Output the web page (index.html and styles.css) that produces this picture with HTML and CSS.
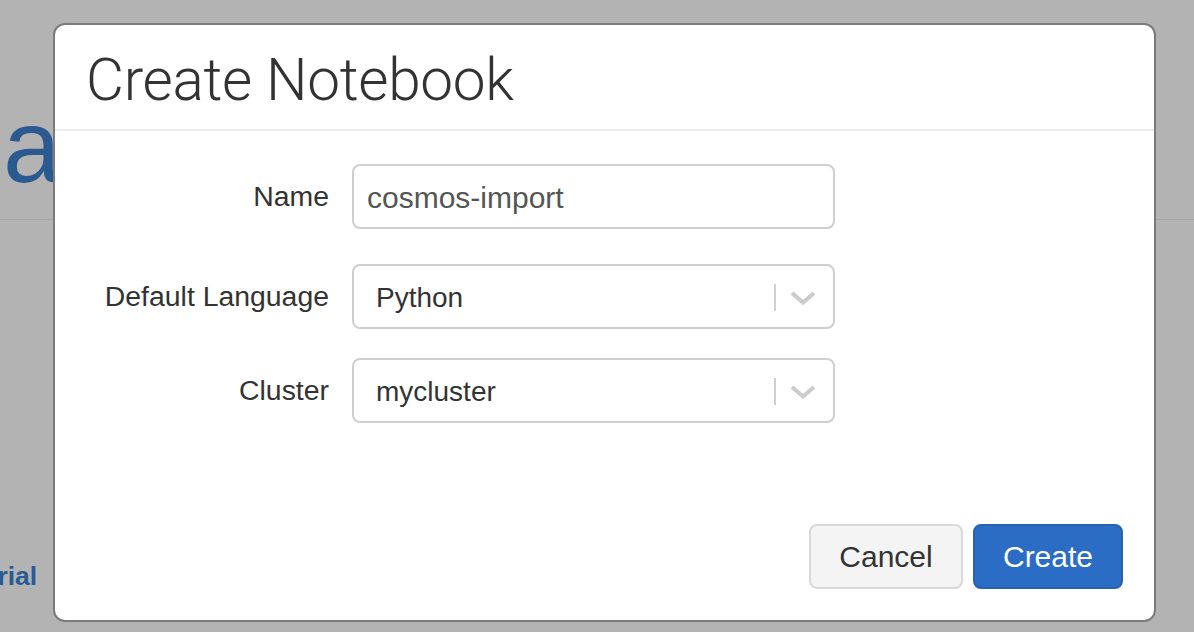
FILE: index.html
```html
<!DOCTYPE html>
<html>
<head>
<meta charset="utf-8">
<link rel="stylesheet" href="styles.css">
</head>
<body>
<div class="page">
  <div class="topbar"><span class="brand">a</span></div>
  <div class="content"><a class="tut">Tutorial</a></div>
</div>
<div class="overlay">
  <div class="modal">
    <div class="modal-header"><h4 class="modal-title">Create Notebook</h4></div>
    <div class="modal-body">
      <div class="row row-name">
        <label class="lbl">Name</label>
        <div class="input">cosmos-import</div>
      </div>
      <div class="row row-lang">
        <label class="lbl">Default Language</label>
        <div class="select"><span class="val">Python</span><span class="sep"></span>
          <svg class="chev" width="26" height="14" viewBox="0 0 26 14"><polyline points="2,2 13,11.5 24,2" fill="none" stroke="#cccccc" stroke-width="4.2" stroke-linecap="butt"/></svg>
        </div>
      </div>
      <div class="row row-cluster">
        <label class="lbl">Cluster</label>
        <div class="select"><span class="val">mycluster</span><span class="sep"></span>
          <svg class="chev" width="26" height="14" viewBox="0 0 26 14"><polyline points="2,2 13,11.5 24,2" fill="none" stroke="#cccccc" stroke-width="4.2" stroke-linecap="butt"/></svg>
        </div>
      </div>
    </div>
    <div class="modal-footer">
      <button class="btn btn-default">Cancel</button>
      <button class="btn btn-primary">Create</button>
    </div>
  </div>
</div>
</body>
</html>
```
FILE: styles.css
```css
html, body {
  margin: 0;
  padding: 0;
  height: 100%;
  overflow: hidden;
}
body {
  background: #b3b3b3;
  font-family: "Liberation Sans", Arial, sans-serif;
  color: #333;
}
.page {
  height: 632px;
}
.topbar {
  height: 220px;
  border-bottom: 1px solid #a7a7a7;
  box-sizing: border-box;
  padding-top: 94px;
}
.brand {
  display: block;
  font-size: 104px;
  line-height: 1;
  color: #2b5a91;
  margin-left: 3px;
}
.content {
  padding-top: 343px;
}
.tut {
  display: block;
  font-size: 26.5px;
  line-height: 1;
  font-weight: bold;
  color: #2b5a91;
  margin-left: -58px;
}
.overlay {
  position: fixed;
  inset: 0;
  padding: 23px 0 0 53px;
}
.modal {
  width: 1103px;
  box-sizing: border-box;
  background: #fff;
  border: 2px solid #7b7b7b;
  border-radius: 12px;
}
.modal-header {
  height: 106px;
  box-sizing: border-box;
  border-bottom: 2px solid #ececec;
  padding: 23px 31px 0;
}
.modal-title {
  margin: 0;
  font-family: "Roboto", "Liberation Sans", sans-serif;
  font-weight: 300;
  font-size: 58.5px;
  line-height: 64px;
  color: #333;
  letter-spacing: -0.3px;
}
.modal-body {
  padding: 33px 30px 71px;
}
.row {
  display: grid;
  grid-template-columns: 244px 483px;
  column-gap: 23px;
  align-items: center;
}
.row-lang { margin-top: 35px; }
.row-cluster { margin-top: 29px; }
.lbl {
  text-align: right;
  font-size: 28.4px;
  color: #333;
}
.input, .select {
  height: 65px;
  box-sizing: border-box;
  border: 2px solid #cfcfcf;
  border-radius: 8px;
  display: flex;
  align-items: center;
}
.input {
  padding-left: 13px;
  padding-top: 2px;
  font-size: 30px;
  color: #555;
}
.select {
  padding-left: 22px;
  padding-right: 17px;
  padding-top: 2px;
  font-size: 28px;
  color: #333;
}
.val {
  flex: 1;
}
.sep {
  width: 2px;
  height: 27px;
  background: #d0d0d0;
  margin-right: 14px;
}
.chev {
  display: block;
  margin-top: 0;
}
.modal-footer {
  display: flex;
  justify-content: flex-end;
  gap: 10px;
  padding: 30px 31px 31px;
}
.btn {
  height: 65px;
  box-sizing: border-box;
  border-radius: 8px;
  font-family: "Liberation Sans", Arial, sans-serif;
  font-size: 30px;
  padding: 0;
}
.btn-default {
  width: 154px;
  background: #f4f4f4;
  border: 2px solid #d9d9d9;
  color: #333;
}
.btn-primary {
  width: 150px;
  background: #2b6cc4;
  border: 2px solid #2862b3;
  color: #fff;
}
```
